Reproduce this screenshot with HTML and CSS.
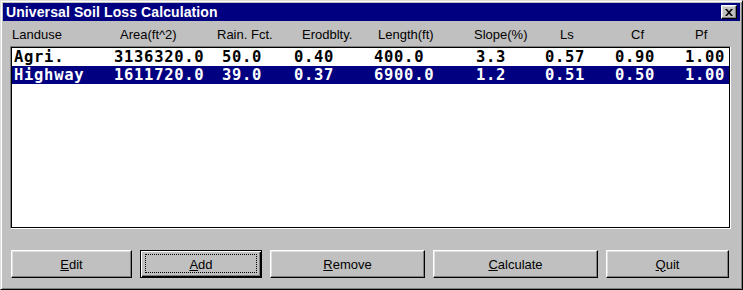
FILE: index.html
```html
<!DOCTYPE html>
<html lang="en">
<head>
  <meta charset="UTF-8">
  <meta name="viewport" content="width=device-width, initial-scale=1.0">
  <title>Universal Soil Loss Calculation</title>
  <link rel="stylesheet" href="styles.css">
</head>
<body>
  <div class="window">
    <div class="titlebar">
      <span class="title">Universal Soil Loss Calculation</span>
      <button type="button" class="close" aria-label="Close">
        <svg width="8" height="7" viewBox="0 0 8 7">
          <path d="M0 0h2l2 2.2L6 0h2L5 3.5 8 7H6L4 4.8 2 7H0l3-3.5z" fill="#000"/>
        </svg>
      </button>
    </div>

    <div class="content">
      <div class="header">
        <span>Landuse</span>
        <span>Area(ft^2)</span>
        <span>Rain. Fct.</span>
        <span>Erodblty.</span>
        <span>Length(ft)</span>
        <span>Slope(%)</span>
        <span>Ls</span>
        <span>Cf</span>
        <span>Pf</span>
      </div>

      <div class="listbox">
        <div class="row">
          <span>Agri.</span>
          <span>3136320.0</span>
          <span>50.0</span>
          <span>0.40</span>
          <span>400.0</span>
          <span>3.3</span>
          <span>0.57</span>
          <span>0.90</span>
          <span>1.00</span>
        </div>
        <div class="row selected">
          <span>Highway</span>
          <span>1611720.0</span>
          <span>39.0</span>
          <span>0.37</span>
          <span>6900.0</span>
          <span>1.2</span>
          <span>0.51</span>
          <span>0.50</span>
          <span>1.00</span>
        </div>
      </div>

      <div class="buttons">
        <button type="button" class="btn btn-edit"><u>E</u>dit</button>
        <button type="button" class="btn btn-add default"><u>A</u>dd</button>
        <button type="button" class="btn btn-remove"><u>R</u>emove</button>
        <button type="button" class="btn btn-calc"><u>C</u>alculate</button>
        <button type="button" class="btn btn-quit"><u>Q</u>uit</button>
      </div>
    </div>
  </div>
</body>
</html>
```

FILE: styles.css
```css
body {
  margin: 0;
  background: #c0c0c0;
  font-family: "Liberation Sans", Arial, sans-serif;
}

.window {
  box-sizing: border-box;
  width: 743px;
  height: 290px;
  padding: 2px;
  background: #c0c0c0;
  border: 1px solid;
  border-color: #dfdfdf #000 #000 #dfdfdf;
  box-shadow: inset 1px 1px #fff, inset -1px -1px #808080;
}

.titlebar {
  display: flex;
  justify-content: space-between;
  align-items: center;
  height: 18px;
  padding: 0 3px 0 3px;
  background: #000080;
}

.title {
  color: #fff;
  font-size: 14px;
  font-weight: bold;
  line-height: 18px;
  letter-spacing: 0.1px;
}

.close {
  display: flex;
  justify-content: center;
  align-items: center;
  box-sizing: border-box;
  width: 16px;
  height: 14px;
  padding: 0;
  background: #c0c0c0;
  border: 1px solid;
  border-color: #fff #000 #000 #fff;
  box-shadow: inset -1px -1px #808080, inset 1px 1px #dfdfdf;
}

.content {
  padding: 0 7px;
}

.header {
  display: grid;
  grid-template-columns: 108px 97px 85px 76px 96px 86px 71px 64px auto;
  height: 25px;
  box-sizing: border-box;
  padding: 6px 0 0 2px;
  font-size: 13px;
  line-height: 15px;
  color: #000;
}

.listbox {
  box-sizing: border-box;
  width: 721px;
  height: 183px;
  padding: 1px;
  background: #fff;
  border: 1px solid;
  border-color: #808080 #fff #fff #808080;
  box-shadow: inset 0 0 0 1px #000;
}

.row {
  display: grid;
  grid-template-columns: 100px 108px 72px 80px 102px 69px 70px 70px auto;
  height: 18px;
  padding-left: 2px;
  font-family: "DejaVu Sans Mono", monospace;
  font-weight: bold;
  font-size: 15.5px;
  letter-spacing: 0.7px;
  line-height: 18px;
  color: #000;
  white-space: pre;
}

.row.selected {
  background: #000080;
  color: #fff;
}

.buttons {
  display: flex;
  gap: 8px;
  margin-top: 21px;
  padding-left: 1px;
}

.btn {
  position: relative;
  box-sizing: border-box;
  height: 28px;
  padding: 0;
  background: #c0c0c0;
  color: #000;
  font-family: "Liberation Sans", Arial, sans-serif;
  font-size: 13px;
  border: 1px solid;
  border-color: #fff #000 #000 #fff;
  box-shadow: inset -1px -1px #808080, inset 1px 1px #dfdfdf;
}

.btn-edit { width: 121px; }
.btn-add { width: 122px; }
.btn-remove { width: 155px; }
.btn-calc { width: 165px; }
.btn-quit { width: 123px; }

.btn.default {
  border-color: #000;
  box-shadow: inset 1px 1px #fff, inset -1px -1px #000, inset -2px -2px #808080;
}

.btn.default::after {
  content: "";
  position: absolute;
  top: 3px;
  left: 4px;
  right: 4px;
  bottom: 4px;
  border: 1px dotted #000;
}
```
